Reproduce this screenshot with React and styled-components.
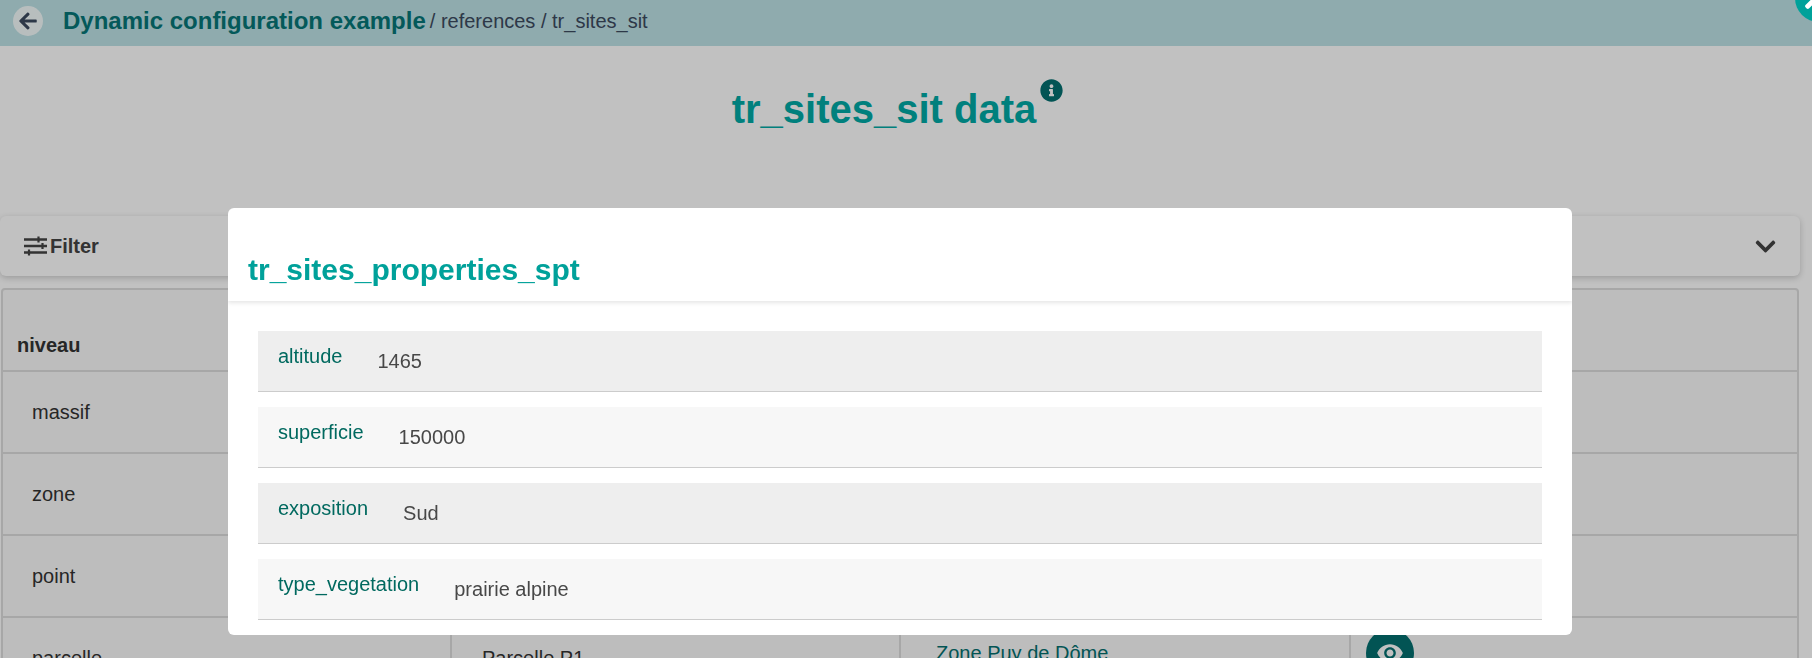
import React from "react";
import styled, { createGlobalStyle } from "styled-components";
import { FaArrowLeft, FaInfoCircle, FaChevronDown, FaTimes } from "react-icons/fa";
import { MdVisibility } from "react-icons/md";

const Global = createGlobalStyle`
  html, body { margin: 0; padding: 0; height: 658px; overflow: hidden; background: #fff; }
  body { font-family: "Liberation Sans", Arial, sans-serif; color: #333; }
  * { box-sizing: border-box; }
`;

const Page = styled.div`
  height: 658px;
  overflow: hidden;
  display: flex;
  flex-direction: column;
`;
const NavBar = styled.header`
  height: 46px;
  flex: none;
  background: #bde2e6;
  display: flex;
  align-items: center;
  padding: 0 0 4px 13px;
`;
const BackButton = styled.span`
  width: 30px;
  height: 30px;
  border-radius: 50%;
  background: #f4fcfc;
  color: #3c4a60;
  display: flex;
  align-items: center;
  justify-content: center;
  font-size: 20px;
  margin-right: 20px;
`;
const Brand = styled.span`
  font-size: 24px;
  font-weight: 700;
  color: #067678;
`;
const Crumbs = styled.span`
  font-size: 20px;
  color: #3c4a60;
  margin-left: 4px;
`;
const TitleBlock = styled.div`
  height: 170px;
  flex: none;
  display: flex;
  justify-content: center;
  align-items: flex-start;
  padding: 37px 17px 0 0;
`;
const PageTitle = styled.h1`
  margin: 0;
  font-size: 40px;
  line-height: 52px;
  font-weight: 700;
  color: #00a9a5;
`;
const InfoIcon = styled.span`
  color: #036f70;
  font-size: 23px;
  display: block;
  margin-left: 4px;
  margin-top: -4px;
  line-height: 23px;
`;
const FilterCard = styled.div`
  height: 60px;
  flex: none;
  width: 1800px;
  background: #fff;
  border-radius: 6px;
  box-shadow: 0 2px 6px rgba(0, 0, 0, 0.2);
  display: flex;
  align-items: center;
  justify-content: space-between;
  padding: 0 23px 0 24px;
  font-size: 20px;
  font-weight: 700;
  color: #444;
`;
const FilterLabel = styled.span`
  display: flex;
  align-items: center;
  gap: 2px;
`;
const Chevron = styled.span`
  color: #444;
  font-size: 23px;
  display: flex;
`;
const Table = styled.div`
  flex: none;
  width: 1798px;
  margin: 12px 0 0 1px;
  border: 2px solid #ddd;
  border-radius: 4px 4px 0 0;
  display: grid;
  grid-template-columns: 449px 449px 450px 1fr;
  grid-auto-rows: 82px;
  background: #fafafa;
`;
const HeadCell = styled.div`
  border-bottom: 2px solid #ddd;
  font-size: 20px;
  font-weight: 700;
  display: flex;
  align-items: flex-end;
  padding: 0 0 13px 14px;
`;
const Cell = styled.div`
  border-bottom: 2px solid #ddd;
  border-right: ${(p) => (p.$last ? "none" : "2px solid #ddd")};
  font-size: 20px;
  display: flex;
  align-items: center;
  padding-left: ${(p) => (p.$wide ? "30px" : "29px")};
  color: #333;
`;
const LinkCell = styled(Cell)`
  color: #037070;
  padding: 0 0 10px 35px;
`;
const EyeButton = styled.span`
  width: 48px;
  height: 48px;
  border-radius: 50%;
  background: #037070;
  color: #fff;
  display: flex;
  align-items: center;
  justify-content: center;
  font-size: 28px;
  margin: -10px 0 0 -14px;
`;
const Overlay = styled.div`
  position: fixed;
  inset: 0;
  background: rgba(0, 0, 0, 0.243);
`;
const Modal = styled.div`
  position: absolute;
  left: 228px;
  top: 208px;
  width: 1344px;
  height: 427px;
  background: #fff;
  border-radius: 6px;
  overflow: hidden;
`;
const ModalHeader = styled.div`
  height: 93px;
  padding: 44px 20px 0;
  box-shadow: 0 2px 4px rgba(0, 0, 0, 0.1);
`;
const ModalTitle = styled.h2`
  margin: 0;
  font-size: 30px;
  line-height: 36px;
  font-weight: 700;
  color: #00a19a;
`;
const ModalBody = styled.div`
  padding: 30px 30px 0;
  display: flex;
  flex-direction: column;
  gap: 15px;
`;
const PropRow = styled.div`
  height: 61px;
  flex: none;
  display: flex;
  align-items: flex-start;
  background: ${(p) => (p.$alt ? "#f7f7f7" : "#eeeeee")};
  border-bottom: 1px solid #ccc;
  padding: 13px 20px 0;
  font-size: 20px;
  line-height: 24px;
`;
const PropLabel = styled.span`
  color: #00695f;
`;
const PropValue = styled.span`
  color: #484848;
  margin: 5px 0 0 35px;
`;
const CloseButton = styled.span`
  position: absolute;
  left: 1795px;
  top: -26px;
  width: 48px;
  height: 48px;
  border-radius: 50%;
  background: #00a19a;
  color: #fff;
  display: flex;
  align-items: center;
  justify-content: center;
  padding: 4px 10px 0 0;
  font-size: 26px;
`;

const FilterIcon = () => (
  <svg width="24" height="20" viewBox="0 0 24 20" fill="none" stroke="currentColor">
    <path d="M0 3.5h23M0 10h23M0 16.5h23" strokeWidth="2.4" />
    <path d="M14.5 0.5v6M18.5 7v6M5 13.5v6" strokeWidth="2.2" />
  </svg>
);

const rows = [["massif"], ["zone"], ["point"], ["parcelle", "Parcelle P1", "Zone Puy de Dôme"]];
const props = [
  ["altitude", "1465"],
  ["superficie", "150000"],
  ["exposition", "Sud"],
  ["type_vegetation", "prairie alpine"],
];

export default function App() {
  return (
    <Page>
      <Global />
      <NavBar>
        <BackButton><FaArrowLeft /></BackButton>
        <Brand>Dynamic configuration example</Brand>
        <Crumbs>/ references / tr_sites_sit</Crumbs>
      </NavBar>
      <TitleBlock>
        <PageTitle>tr_sites_sit data</PageTitle>
        <InfoIcon><FaInfoCircle /></InfoIcon>
      </TitleBlock>
      <FilterCard>
        <FilterLabel><FilterIcon />Filter</FilterLabel>
        <Chevron><FaChevronDown /></Chevron>
      </FilterCard>
      <Table>
        <HeadCell>niveau</HeadCell>
        <HeadCell />
        <HeadCell />
        <HeadCell />
        {rows.map(([a, b, c]) => (
          <React.Fragment key={a}>
            <Cell>{a}</Cell>
            <Cell $wide>{b}</Cell>
            <LinkCell>{c}</LinkCell>
            <Cell $last>{c && <EyeButton><MdVisibility /></EyeButton>}</Cell>
          </React.Fragment>
        ))}
      </Table>
      <Overlay>
        <Modal>
          <ModalHeader><ModalTitle>tr_sites_properties_spt</ModalTitle></ModalHeader>
          <ModalBody>
            {props.map(([k, v], i) => (
              <PropRow key={k} $alt={i % 2 === 1}>
                <PropLabel>{k}</PropLabel>
                <PropValue>{v}</PropValue>
              </PropRow>
            ))}
          </ModalBody>
        </Modal>
        <CloseButton><FaTimes /></CloseButton>
      </Overlay>
    </Page>
  );
}
